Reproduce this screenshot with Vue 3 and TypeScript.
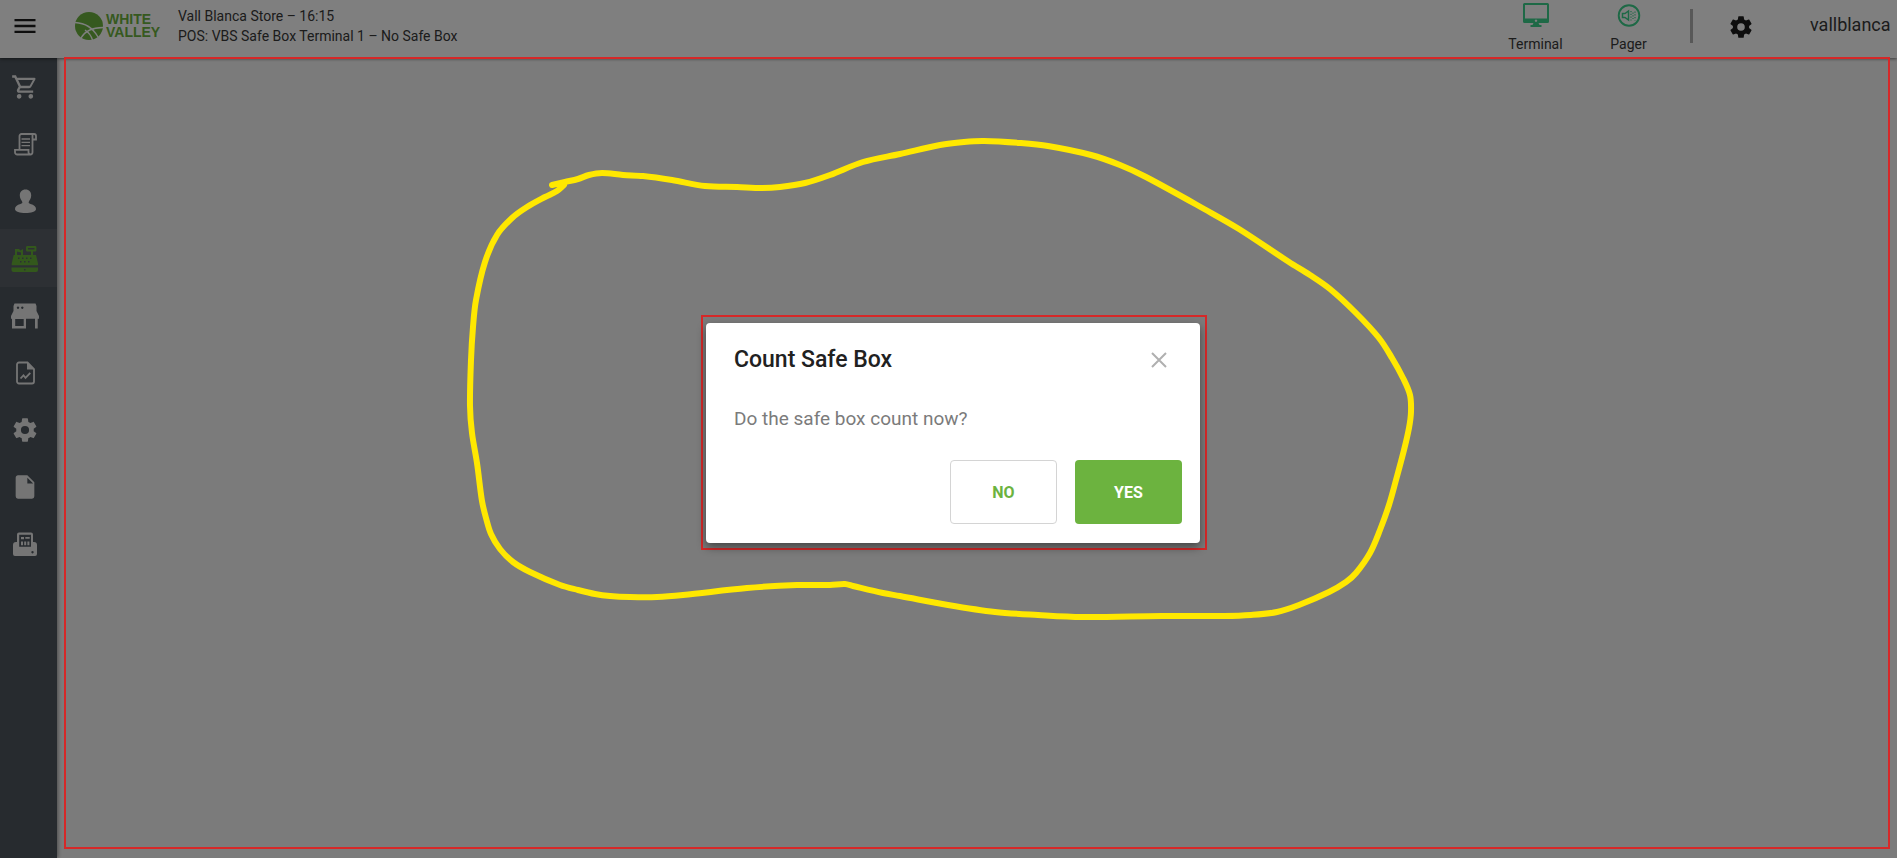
<script setup lang="ts">
import { ref } from 'vue'

type Point = [number, number]

interface NavItem {
  id: string
  label: string
}

const navItems: NavItem[] = [
  { id: 'cart', label: 'Sales' },
  { id: 'script', label: 'Receipts' },
  { id: 'person', label: 'Customers' },
  { id: 'register', label: 'Cash register' },
  { id: 'store', label: 'Store' },
  { id: 'report', label: 'Reports' },
  { id: 'cog', label: 'Settings' },
  { id: 'file', label: 'Documents' },
  { id: 'printer', label: 'Fiscal printer' },
]

const active = ref('register')

const cogPath =
  'M12,15.5A3.5,3.5 0 0,1 8.5,12A3.5,3.5 0 0,1 12,8.5A3.5,3.5 0 0,1 15.5,12A3.5,3.5 0 0,1 12,15.5M19.43,12.97C19.47,12.65 19.5,12.33 19.5,12C19.5,11.67 19.47,11.34 19.43,11L21.54,9.37C21.73,9.22 21.78,8.95 21.66,8.73L19.66,5.27C19.54,5.05 19.27,4.96 19.05,5.05L16.56,6.05C16.04,5.66 15.5,5.32 14.87,5.07L14.5,2.42C14.46,2.18 14.25,2 14,2H10C9.75,2 9.54,2.18 9.5,2.42L9.13,5.07C8.5,5.32 7.96,5.66 7.44,6.05L4.95,5.05C4.73,4.96 4.46,5.05 4.34,5.27L2.34,8.73C2.21,8.95 2.27,9.22 2.46,9.37L4.57,11C4.53,11.34 4.5,11.67 4.5,12C4.5,12.33 4.53,12.65 4.57,12.97L2.46,14.63C2.27,14.78 2.21,15.05 2.34,15.27L4.34,18.73C4.46,18.95 4.73,19.03 4.95,18.95L7.44,17.94C7.96,18.34 8.5,18.68 9.13,18.93L9.5,21.58C9.54,21.82 9.75,22 10,22H14C14.25,22 14.46,21.82 14.5,21.58L14.87,18.93C15.5,18.67 16.04,18.34 16.56,17.94L19.05,18.95C19.27,19.03 19.54,18.95 19.66,18.73L21.66,15.27C21.78,15.05 21.73,14.78 21.54,14.63L19.43,12.97Z'

// Freehand marker stroke around the dialog
const stroke: Point[] = [
  [552, 185], [565, 182], [578, 179], [589, 175], [602, 173], [623, 175], [643, 176], [672, 180],
  [705, 186], [737, 187], [762, 188], [780, 187], [805, 183], [830, 175], [863, 162], [900, 154],
  [940, 145], [964, 142], [984, 141], [1020, 143], [1048, 146], [1091, 155], [1120, 165],
  [1146, 177], [1206, 210], [1239, 229], [1289, 262], [1310, 275], [1330, 289], [1356, 313],
  [1379, 338], [1392, 358], [1403, 378], [1410, 395], [1411, 412], [1409, 428], [1404, 450],
  [1396, 480], [1389, 505], [1380, 530], [1370, 553], [1356, 573], [1346, 582], [1329, 592],
  [1299, 605], [1277, 612], [1251, 615], [1224, 616], [1162, 616], [1082, 617], [1038, 615],
  [995, 612], [948, 605], [900, 596], [883, 593], [853, 586], [845, 584], [830, 585], [797, 585],
  [747, 588], [683, 595], [657, 597], [630, 597], [610, 596], [595, 594], [578, 590], [560, 585],
  [530, 572], [513, 562], [500, 549], [491, 534], [486, 518], [482, 501], [477, 463], [472, 433],
  [470, 406], [471, 360], [473, 327], [476, 300], [485, 262], [497, 235], [512, 218], [527, 207],
  [545, 197], [557, 191], [564, 185],
]

function smooth(points: Point[]): string {
  let d = `M${points[0][0]} ${points[0][1]}`
  for (let i = 0; i < points.length - 1; i++) {
    const a = points[Math.max(i - 1, 0)]
    const b = points[i]
    const c = points[i + 1]
    const e = points[Math.min(i + 2, points.length - 1)]
    const k = Math.hypot(c[0] - b[0], c[1] - b[1]) / 3
    const m1 = Math.hypot(c[0] - a[0], c[1] - a[1]) || 1
    const m2 = Math.hypot(e[0] - b[0], e[1] - b[1]) || 1
    d += `C${b[0] + ((c[0] - a[0]) / m1) * k} ${b[1] + ((c[1] - a[1]) / m1) * k} `
    d += `${c[0] - ((e[0] - b[0]) / m2) * k} ${c[1] - ((e[1] - b[1]) / m2) * k} ${c[0]} ${c[1]}`
  }
  return d
}

const strokePath = smooth(stroke)
</script>

<template>
  <div class="app">
    <header class="topbar">
      <button class="icon-btn menu-btn" type="button" aria-label="Menu">
        <svg class="icon" viewBox="0 0 24 24"><path d="M3,6H21V8H3V6M3,11H21V13H3V11M3,16H21V18H3V16Z" /></svg>
      </button>
      <div class="brand">
        <svg class="brand-mark" viewBox="0 0 28 28">
          <circle cx="14" cy="14" r="14" />
          <path d="M0 10.5C10 11 18 16 23 25M6 26C10 19 18 15.5 28 15.5M10 18C13 20 16 23 17.5 28" />
        </svg>
        <div class="brand-name"><span>WHITE</span><span>VALLEY</span></div>
      </div>
      <div class="context">
        <span>Vall Blanca Store – 16:15</span>
        <span>POS: VBS Safe Box Terminal 1 – No Safe Box</span>
      </div>
      <div class="tools">
        <button class="tool" type="button">
          <svg class="tool-icon" viewBox="0 0 28 26">
            <path fill-rule="evenodd" d="M2.500 1H25.500A1.500 1.500 0 0 1 27 2.500V19.500A1.500 1.500 0 0 1 25.500 21H2.500A1.500 1.500 0 0 1 1 19.500V2.500A1.500 1.500 0 0 1 2.500 1ZM3 3V16.500H25V3ZM14 17.500a1.200 1.200 0 1 0 .01 0ZM11.500 21H16.500L17.500 23H19.500V25H8.500V23H10.500Z" />
          </svg>
          <span>Terminal</span>
        </button>
        <button class="tool" type="button">
          <svg class="tool-icon" viewBox="0 0 28 26">
            <g fill="none" stroke="currentColor">
              <circle cx="14" cy="13.500" r="10.300" stroke-width="1.900" />
              <path d="M7.500 11.500H10L13.500 9V18L10 15.500H7.500Z" stroke-width="1.500" />
              <path d="M16 9v10M18 10.500v6.500M20 9.500v9" stroke-width="1.200" stroke-dasharray="1.200 1.600" />
            </g>
          </svg>
          <span>Pager</span>
        </button>
        <span class="divider"></span>
        <button class="icon-btn cog-btn" type="button" aria-label="Preferences">
          <svg class="icon" viewBox="0 0 24 24"><path :d="cogPath" /></svg>
        </button>
        <span class="user">vallblanca</span>
      </div>
    </header>

    <div class="body">
      <nav class="sidebar">
        <button
          v-for="item in navItems"
          :key="item.id"
          type="button"
          class="nav-item"
          :class="{ active: item.id === active }"
          :aria-label="item.label"
          @click="active = item.id"
        >
          <svg v-if="item.id === 'cart'" class="icon" viewBox="0 0 24 24">
            <path d="M17,18A2,2 0 0,1 19,20A2,2 0 0,1 17,22C15.89,22 15,21.1 15,20C15,18.89 15.89,18 17,18M1,2H4.27L5.21,4H20A1,1 0 0,1 21,5C21,5.17 20.95,5.34 20.88,5.5L17.3,11.97C16.96,12.58 16.3,13 15.55,13H8.1L7.2,14.63L7.17,14.75A0.25,0.25 0 0,0 7.42,15H19V17H7C5.89,17 5,16.1 5,15C5,14.65 5.09,14.32 5.24,14.04L6.6,11.59L3,4H1V2M7,18A2,2 0 0,1 9,20A2,2 0 0,1 7,22C5.89,22 5,21.1 5,20C5,18.89 5.89,18 7,18M16,11L18.78,6H6.14L8.5,11H16Z" />
          </svg>
          <svg v-else-if="item.id === 'script'" class="icon" viewBox="0 0 28 28">
            <g fill="none" stroke="currentColor" stroke-width="1.800">
              <path d="M8.500 19.500V6a2 2 0 0 1 2-2H23a2 2 0 0 1 2 2V9.500H21.500M21.500 4.500V22.300a2.200 2.200 0 0 1-2.200 2.200H6.200A2.200 2.200 0 0 1 4 22.300V19.800H17.500V22.300a2 2 0 0 0 2 2" />
              <path d="M10.500 9H19M10.500 12.300H19M10.500 15.600H19" stroke-width="1.300" />
            </g>
          </svg>
          <svg v-else-if="item.id === 'person'" class="icon" viewBox="0 0 28 28">
            <path d="M14.500 2.500C18.200 2.500 20.200 5 20.200 8.500C20.200 11.500 18.500 13 17.700 15C17.500 16 18 16.500 19.500 17C23 18 25 19.500 25 22C25 24.800 20 26 14.500 26S4 24.800 4 22C4 19.500 6 18 9.500 17C11 16.500 11.500 16 11.300 15C10.500 13 8.800 11.500 8.800 8.500C8.800 5 10.800 2.500 14.500 2.500Z" />
          </svg>
          <svg v-else-if="item.id === 'register'" class="icon" viewBox="0 0 28 28">
            <path fill-rule="evenodd" d="M16.200 2H24.200A1.200 1.200 0 0 1 25.400 3.200V6.200A1.200 1.200 0 0 1 24.200 7.400H22V11H25L27 19.500V21.300H.7V19.500L2.700 11H4V5H8L9.500 6.500L12 5V11H20V7.400H16.200A1.200 1.200 0 0 1 15 6.200V3.200A1.200 1.200 0 0 1 16.200 2ZM17 4V5.500H23.500V4ZM6 7.500V11H10V8.500ZM7 13.500v1.500h1.500v-1.500ZM11 13.500v1.500h1.500v-1.500ZM15 13.500v1.500h1.500v-1.500ZM19 13.500v1.500h1.500v-1.500ZM9 17v1.500h1.500v-1.500ZM13 17v1.500h1.500v-1.500ZM17 17v1.500h1.500v-1.500ZM.5 23.500H27V26A2 2 0 0 1 25 28H2.500A2 2 0 0 1 .5 26ZM13 25v1.500h1.500v-1.500Z" />
          </svg>
          <svg v-else-if="item.id === 'store'" class="icon" viewBox="0 0 28 28">
            <path fill-rule="evenodd" d="M3.500 1.500H24.500L25.500 4V9L28 14V16.800H26.700V26.500H24V16.800H15V26.500H1V16.800H0V14L2.500 9V4ZM7 4.500a1.200 1.200 0 1 0 .01 0ZM11.300 4.500a1.200 1.200 0 1 0 .01 0ZM4.200 17V24H12.700V17Z" />
          </svg>
          <svg v-else-if="item.id === 'report'" class="icon" viewBox="0 0 28 28">
            <g fill="none" stroke="currentColor" stroke-width="1.800">
              <path d="M8 3.500H16.500L23 10V22.500a2 2 0 0 1-2 2H8a2 2 0 0 1-2-2V5.500a2 2 0 0 1 2-2Z" />
              <path d="M9.500 19.500L12.500 16.300L14.500 18.800L19.300 13.800" />
            </g>
            <path d="M16 3L23.500 10.500H16Z" />
          </svg>
          <svg v-else-if="item.id === 'cog'" class="icon" viewBox="0 0 24 24"><path :d="cogPath" /></svg>
          <svg v-else-if="item.id === 'file'" class="icon" viewBox="0 0 24 24">
            <path d="M14,9V4L19,9M6,2C4.890,2 4,2.890 4,4V20A2,2 0 0,0 6,22H18A2,2 0 0,0 20,20V8L14,2H6Z" />
          </svg>
          <svg v-else class="icon" viewBox="0 0 28 28">
            <path fill-rule="evenodd" d="M8 2.500H20A2 2 0 0 1 22 4.500V12H23A3 3 0 0 1 26 15V24A2 2 0 0 1 24 26H4A2 2 0 0 1 2 24V15A3 3 0 0 1 5 12H6V4.500A2 2 0 0 1 8 2.500ZM8.200 4.800V16.800H20V4.800ZM21.500 21a1.200 1.200 0 1 0 .01 0Z" />
            <path d="M10 7h3v2.200h-3ZM14.300 7h4.400v1.800h-4.400ZM10 11.500h2v3.800h-2ZM13.200 11.500h2v3.800h-2ZM16.400 11.500h2v3.800h-2Z" />
          </svg>
        </button>
      </nav>
      <main class="content"></main>
    </div>

    <div class="backdrop">
      <div class="dialog-frame">
        <section class="dialog" role="dialog" aria-modal="true" aria-labelledby="dialog-title">
          <div class="dialog-head">
            <h2 id="dialog-title">Count Safe Box</h2>
            <button class="close" type="button" aria-label="Close">
              <svg viewBox="0 0 16 16"><path d="M1 1L15 15M15 1L1 15" /></svg>
            </button>
          </div>
          <p>Do the safe box count now?</p>
          <div class="actions">
            <button class="btn outlined" type="button">NO</button>
            <button class="btn filled" type="button">YES</button>
          </div>
        </section>
      </div>
    </div>

    <div class="page-frame"></div>
    <svg class="marker" viewBox="0 0 1897 858" aria-hidden="true"><path :d="strokePath" /></svg>
  </div>
</template>

<style>
body {
  margin: 0;
}
</style>

<style scoped>
.app {
  position: relative;
  display: flex;
  flex-direction: column;
  min-height: 100vh;
  overflow: hidden;
  background: #f7f7f7;
  color: #383838;
  font-family: Roboto, 'Liberation Sans', sans-serif;
}

button {
  margin: 0;
  padding: 0;
  border: 0;
  background: none;
  color: inherit;
  font: inherit;
  cursor: pointer;
}

.icon {
  display: block;
  width: 28px;
  height: 28px;
  fill: currentColor;
}

.topbar {
  position: relative;
  display: flex;
  height: 58px;
  background: #fff;
  box-shadow: 0 1px 3px rgba(0, 0, 0, 0.5);
}

.icon-btn {
  display: grid;
  place-items: center;
  color: #1c1c1c;
}

.menu-btn {
  width: 50px;
  height: 52px;
}

.brand {
  display: flex;
  align-items: center;
  gap: 3px;
  width: 103px;
  height: 52px;
  margin-left: 25px;
}

.brand-mark {
  width: 28px;
  height: 28px;
  flex: none;
  fill: #6cb33f;
}

.brand-mark path {
  fill: none;
  stroke: #fff;
  stroke-width: 1.4;
}

.brand-name {
  display: flex;
  flex-direction: column;
  color: #6cb33f;
  font: bold 14px/13px 'Liberation Sans', Arial, sans-serif;
}

.context {
  display: flex;
  flex-direction: column;
  padding-top: 6px;
  font-size: 14px;
  line-height: 20px;
  white-space: nowrap;
}

.tools {
  display: flex;
  margin-left: auto;
}

.tool {
  display: flex;
  flex-direction: column;
  align-items: center;
  gap: 6px;
  width: 93px;
  height: 58px;
  padding-top: 2px;
  font-size: 14px;
  line-height: 20px;
}

.tool-icon {
  width: 28px;
  height: 26px;
  fill: currentColor;
  color: #3cd28c;
}

.divider {
  width: 3px;
  height: 34px;
  margin: 9px 31px 0 15px;
  background: #b0b0b0;
}

.cog-btn {
  width: 34px;
  height: 53px;
}

.cog-btn .icon {
  width: 26px;
  height: 26px;
}

.user {
  width: 82px;
  margin: 0 5px 0 52px;
  padding-top: 13px;
  overflow: hidden;
  font-size: 18px;
  line-height: 24px;
}

.body {
  display: flex;
  flex: 1;
}

.sidebar {
  display: flex;
  flex-direction: column;
  width: 57px;
  background: #4e565e;
  box-shadow: 1px 0 4px rgba(0, 0, 0, 0.4);
}

.nav-item {
  display: flex;
  align-items: center;
  height: 57px;
  padding-left: 11px;
  color: #ebebeb;
}

.nav-item.active {
  height: 58px;
  background: #5a6068;
  color: #66b038;
}

.content {
  flex: 1;
}

.backdrop {
  position: absolute;
  inset: 0;
  display: grid;
  place-items: center;
  padding: 7px 0 0 11px;
  background: rgba(0, 0, 0, 0.5);
}

.dialog-frame {
  padding: 6px 5px 5px 3px;
  border: 2px solid #d62828;
}

.dialog {
  box-sizing: border-box;
  width: 494px;
  max-width: 100%;
  padding: 20px 18px 19px 28px;
  border-radius: 4px;
  background: #fff;
  box-shadow: 0 4px 10px rgba(0, 0, 0, 0.45);
}

.dialog-head {
  display: flex;
  align-items: center;
  justify-content: space-between;
}

h2 {
  margin: 0;
  color: #212121;
  font-size: 23px;
  font-weight: 500;
  line-height: 34px;
}

.close {
  display: grid;
  place-items: center;
  width: 46px;
  height: 34px;
}

.close svg {
  width: 16px;
  height: 16px;
  stroke: #b0b0b0;
  stroke-width: 2;
}

p {
  margin: 28px 0;
  color: #7b7b7b;
  font-size: 19px;
  line-height: 27px;
}

.actions {
  display: flex;
  justify-content: flex-end;
  gap: 18px;
}

.btn {
  box-sizing: border-box;
  width: 107px;
  height: 64px;
  border-radius: 4px;
  font-size: 16px;
  font-weight: 700;
}

.outlined {
  border: 1px solid #d4d4d4;
  color: #6cb33f;
}

.filled {
  background: #6cb33f;
  color: #fff;
}

.page-frame {
  position: absolute;
  inset: 57px 7px 9px 64px;
  border: 2px solid #d62828;
  pointer-events: none;
}

.marker {
  position: absolute;
  inset: 0;
  width: 100%;
  height: 100%;
  pointer-events: none;
}

.marker path {
  fill: none;
  stroke: #ffe800;
  stroke-width: 6;
  stroke-linecap: round;
  stroke-linejoin: round;
}
</style>
